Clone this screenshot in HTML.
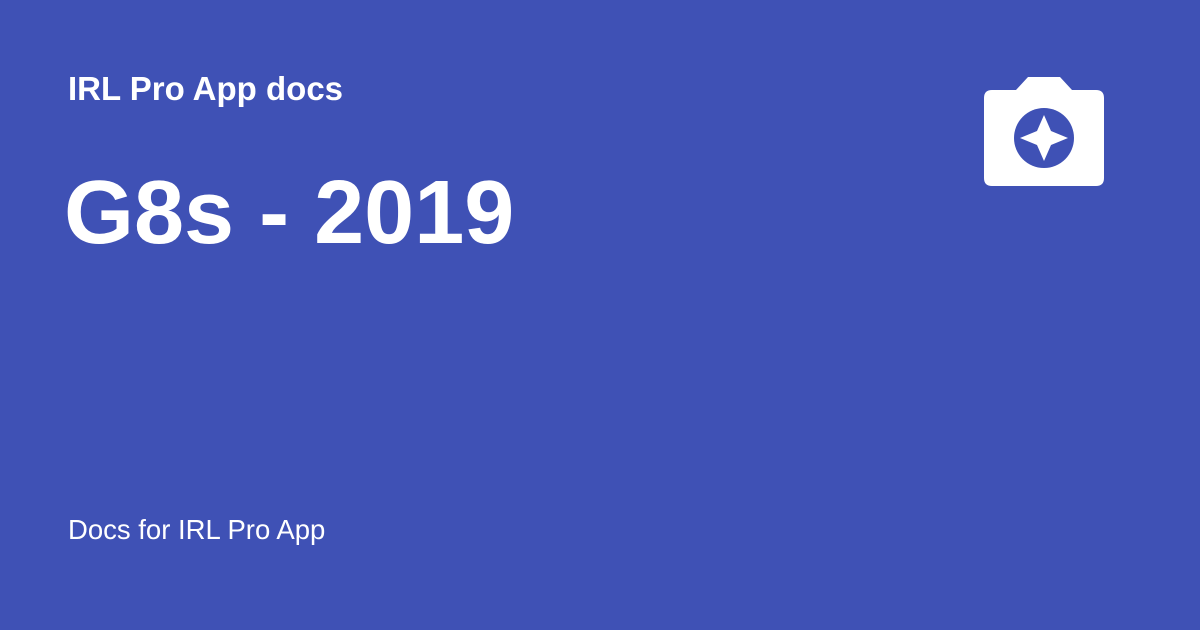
<!DOCTYPE html><html><head><style>
body{margin:0;width:1200px;height:630px;background:#3f51b5;font-family:"Liberation Sans",sans-serif;color:#fff;position:relative;overflow:hidden}
div{position:absolute;white-space:nowrap}
</style></head><body>
<div style="left:68px;top:70px;font-size:33px;font-weight:bold">IRL Pro App docs</div>
<div style="left:64px;top:162px;font-size:90px;font-weight:bold">G8s - 2019</div>
<div style="left:68px;top:514px;font-size:27.5px">Docs for IRL Pro App</div>
<svg style="position:absolute;left:0;top:0" width="1200" height="630">
<path d="M1016 90 L1028 77 L1060 77 L1072 90 L1096 90 Q1104 90 1104 98 L1104 178 Q1104 186 1096 186 L992 186 Q984 186 984 178 L984 98 Q984 90 992 90 Z" fill="#fff"/>
<circle cx="1044" cy="138" r="30" fill="#3f51b5"/>
<path d="M1044 115 L1051 131 L1068 138 L1051 145 L1044 161 L1037 145 L1020 138 L1037 131 Z" fill="#fff"/>
</svg>
</body></html>
